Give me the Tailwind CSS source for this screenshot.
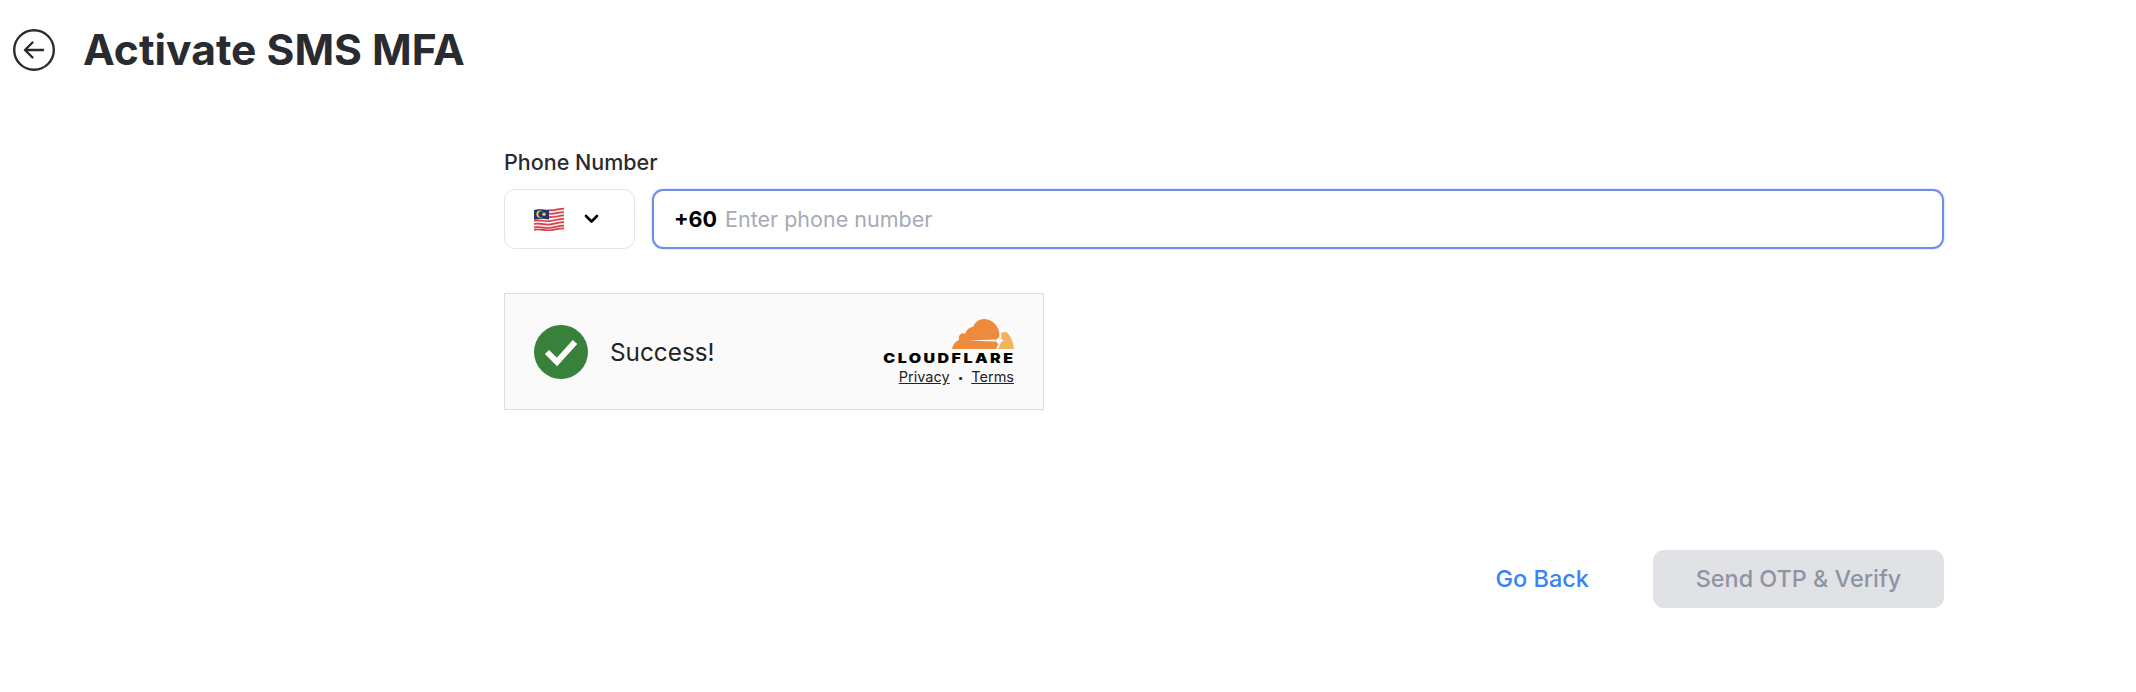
<!DOCTYPE html>
<html lang="en">
<head>
    <meta charset="UTF-8">
    <title>Activate SMS MFA</title>
    <script src="https://cdn.jsdelivr.net/npm/@tailwindcss/browser@4"></script>
</head>
<body class="bg-white font-['Inter',sans-serif] text-[#2a2b30] h-[692px] overflow-hidden">

    <!-- Header -->
    <header class="flex items-center pl-[13px] pt-[28px] gap-[28px]">
        <svg class="w-[42px] h-[42px]" viewBox="0 0 42 42" fill="none" stroke="#2a2b30" stroke-width="2.4" stroke-linecap="round" stroke-linejoin="round">
            <circle cx="21" cy="21" r="19.8"/>
            <path d="M30 21H12.5M19.5 13.5L12 21l7.5 7.5"/>
        </svg>
        <h1 class="text-[42.6px] leading-[44px] font-bold">Activate SMS MFA</h1>
    </header>

    <main class="ml-[504px] w-[1440px] mt-[76px]">
        <!-- Phone number -->
        <label class="block text-[21.5px] leading-[28px] font-medium">Phone Number</label>
        <div class="flex gap-[17px] mt-[13px]">
            <button class="w-[131px] h-[60px] rounded-[11px] border border-[#e4e5e8] bg-white flex items-center pl-[29px] gap-[20px]">
                <svg class="w-[30px] h-[24px] block" viewBox="0 0 30 24" fill="none">
                    <path d="M0 3C6 1 10 4 15 3S25 1 30 1V22C25 22 20 24 15 23S6 21 0 23Z" fill="#f6eeee"/>
                    <g stroke="#d8414a" stroke-width="1.7">
                        <path d="M14 3.2C20 4 25 1.6 30 1.6"/>
                        <path d="M14 6.6C20 7.4 25 5 30 5"/>
                        <path d="M14 10C20 10.8 25 8.4 30 8.4"/>
                        <path d="M0 13.6C6 12.4 10 14.6 15 14.2S25 11.8 30 11.8"/>
                        <path d="M0 17C6 15.8 10 18 15 17.6S25 15.2 30 15.2"/>
                        <path d="M0 20.4C6 19.2 10 21.4 15 21S25 18.6 30 18.6"/>
                        <path d="M0 22.8C6 21.6 10 23.8 15 23.4S25 21.4 30 21.4"/>
                    </g>
                    <path d="M0 3C5 1.4 10 3 15 3V12.4C10 11.4 5 11.4 0 12.8Z" fill="#24346f"/>
                    <circle cx="6" cy="7.2" r="3.6" fill="#f5c842"/>
                    <circle cx="7.4" cy="7.2" r="3" fill="#24346f"/>
                    <circle cx="10" cy="7.2" r="1.7" fill="#f5c842"/>
                </svg>
                <svg class="w-[15px] h-[10px]" viewBox="0 0 15 10" fill="none" stroke="#000" stroke-width="2.6" stroke-linecap="round" stroke-linejoin="round">
                    <path d="M2 2l5.5 5.5L13 2"/>
                </svg>
            </button>
            <div class="flex-1 h-[60px] rounded-[11px] border-2 border-[#6f8ee8] shadow-[0_0_2px_#a9bcf2] flex items-center pl-[20px] pt-[1px] text-[21.5px]">
                <span class="font-bold text-black">+60</span>
                <span class="ml-[8px] text-[#a5abb8]">Enter phone number</span>
            </div>
        </div>

        <!-- Turnstile widget -->
        <div class="w-[540px] h-[117px] mt-[44px] border border-[#dedede] bg-[#fafafa] flex items-center justify-between pl-[29px] pr-[29px]">
            <div class="flex items-center gap-[22px]">
                <svg class="w-[54px] h-[54px]" viewBox="0 0 54 54">
                    <circle cx="27" cy="27" r="27" fill="#38813a"/>
                    <path d="M13 27l10 10 18-20" fill="none" stroke="#fff" stroke-width="6"/>
                </svg>
                <span class="text-[24.3px] text-[#232323] pt-[2px]">Success!</span>
            </div>
            <div class="flex flex-col items-end pt-[2px]">
                <svg class="w-[62px] h-[30px]" viewBox="0 0 62 30">
                    <path d="M0 30C1 25 4 22 7 21C6 16 10 13 13 15C15 10 18 8 21 8C23 3 27 0 32 0C39 0 45 5 47 12C48 17 47 25 44 30Z" fill="#ee8a3c"/>
                    <path d="M16 21.5L43 20.5V22.5Z" fill="#fafafa"/>
                    <path d="M43 21.5L47 18L48 21L52 21.5L48 23L47 26Z" fill="#fafafa"/>
                    <path d="M46 30C48 27 49 24 49 23L52 21.5L49 20C50 17 49 15 49 14C51 13 53 13 54 13C58 15 61 22 62 30Z" fill="#f4b25a"/>
                </svg>
                <span class="block font-black text-[13px] leading-[14px] tracking-[2px] text-black mt-[2px] mr-[-1px] origin-right scale-x-[1.23]">CLOUDFLARE</span>
                <div class="flex items-center gap-[8px] text-[14.5px] leading-[18px] text-[#232323] mt-[3px]">
                    <a class="underline">Privacy</a><span class="text-[10px]">•</span><a class="underline">Terms</a>
                </div>
            </div>
        </div>

        <!-- Actions -->
        <div class="flex justify-end items-center mt-[140px]">
            <a class="text-[#3b82f6] text-[23.5px] font-medium mr-[64px]">Go Back</a>
            <button class="w-[291px] h-[58px] rounded-[11px] bg-[#e1e2e6] text-[#8f94a3] text-[23.4px] font-medium">Send OTP &amp; Verify</button>
        </div>
    </main>

</body>
</html>
